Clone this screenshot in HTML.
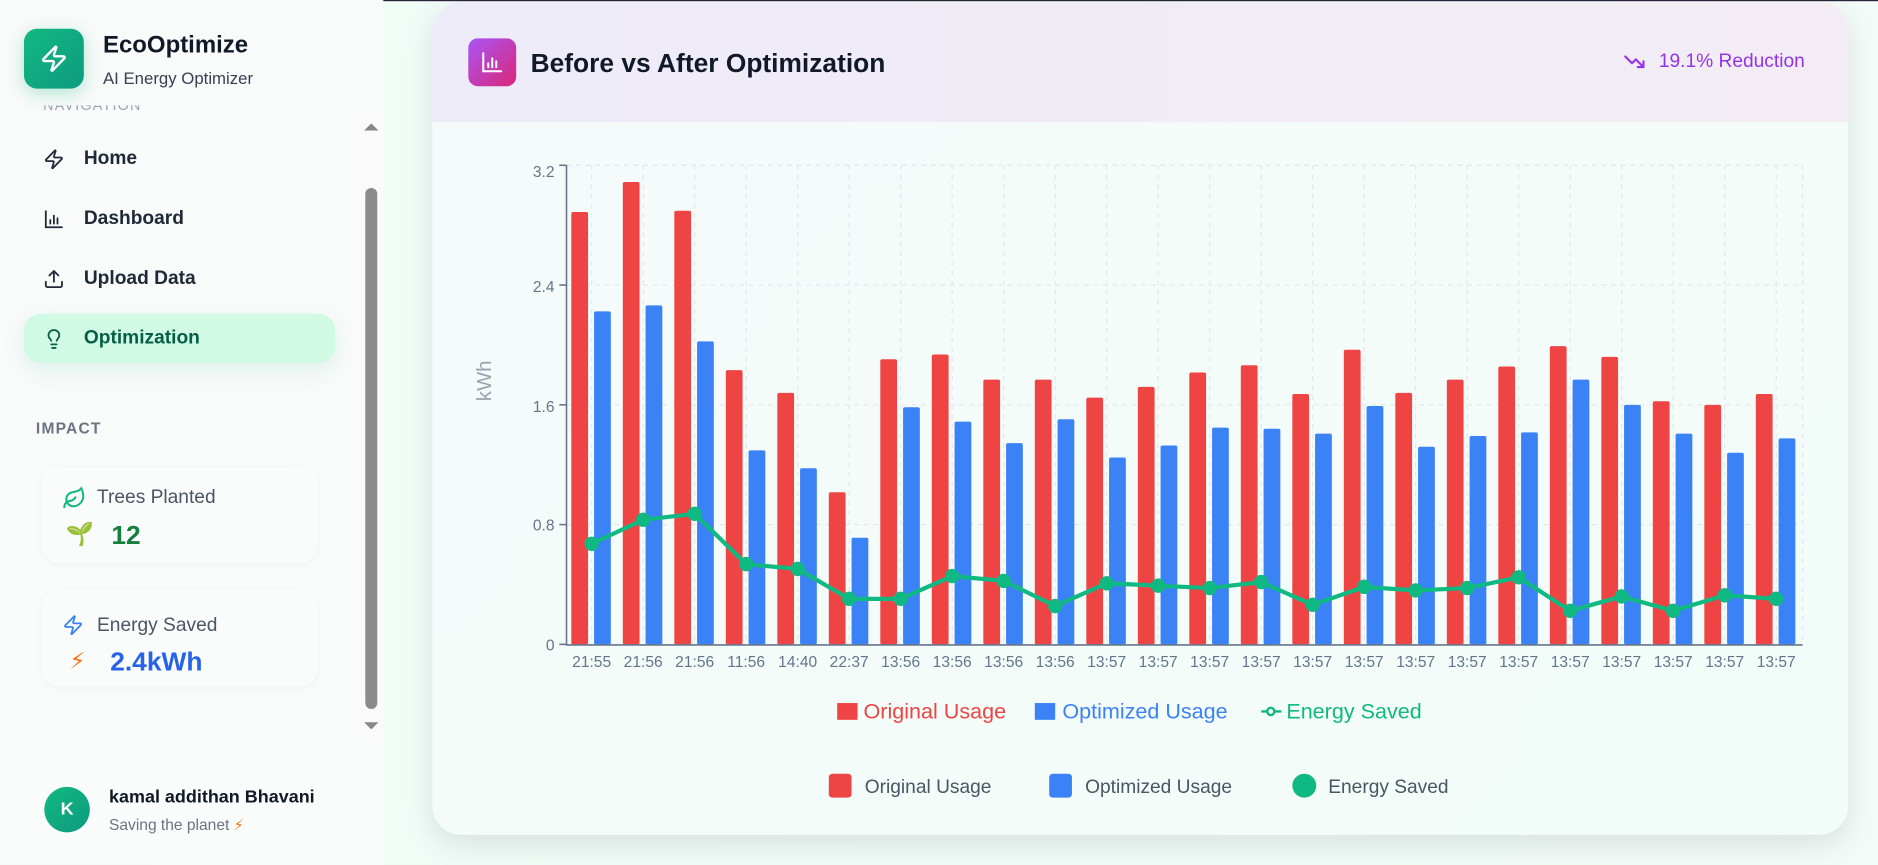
<!DOCTYPE html>
<html><head><meta charset="utf-8">
<style>
html,body{margin:0;padding:0;width:1878px;height:865px;overflow:hidden;background:#eefbf5;font-family:"Liberation Sans","DejaVu Sans",sans-serif;}
#w{position:absolute;left:0;top:0;width:1568px;height:722px;transform:scale(1.19770);transform-origin:0 0;background:linear-gradient(90deg,#effcf6,#f2fbf8);}
.sb{position:absolute;left:0;top:0;width:320px;height:722px;background:#f9fafa;}
.abs{position:absolute;}
.nav{position:absolute;left:20px;width:260px;height:40px;display:flex;align-items:center;font-size:16px;font-weight:600;color:#1f2937;}
.nav svg{position:absolute;left:16px;}
.nav span{position:absolute;left:50px;}
.card{position:absolute;left:35px;width:230px;height:80px;background:#fafbfb;border-radius:14px;box-shadow:0 1px 6px rgba(0,0,0,0.03);}
</style></head><body>
<div id="w">
<div class="abs" style="left:0;top:0;width:1568px;height:1px;background:#2a2238"></div>
<div class="sb">
  <div class="abs" style="left:20px;top:24px;width:50px;height:50px;border-radius:11px;background:linear-gradient(135deg,#12b981,#0e9a80);box-shadow:0 4px 14px rgba(16,185,129,0.3)"></div>
  <svg class="abs" style="left:33px;top:37px" width="24" height="24" viewBox="0 0 24 24" fill="none" stroke="#fff" stroke-width="2" stroke-linejoin="round"><path d="M4 14a1 1 0 0 1-.78-1.63l9.9-10.2a.5.5 0 0 1 .86.46l-1.92 6.02A1 1 0 0 0 13 10h7a1 1 0 0 1 .78 1.63l-9.9 10.2a.5.5 0 0 1-.86-.46l1.92-6.02A1 1 0 0 0 11 14z"/></svg>
  <div class="abs" style="left:86px;top:27px;font-size:20px;font-weight:700;color:#111827">EcoOptimize</div>
  <div class="abs" style="left:86px;top:57px;font-size:14px;color:#374151">AI Energy Optimizer</div>
  <div class="abs" style="left:36px;top:88px;width:112px;height:6px;overflow:hidden;font-size:12px;color:#9ca3af;letter-spacing:1px;line-height:0px">NAVIGATION</div>
  <div class="nav" style="top:113px"><svg width="18" height="18" viewBox="0 0 24 24" fill="none" stroke="#1f2937" stroke-width="2" stroke-linejoin="round"><path d="M4 14a1 1 0 0 1-.78-1.63l9.9-10.2a.5.5 0 0 1 .86.46l-1.92 6.02A1 1 0 0 0 13 10h7a1 1 0 0 1 .78 1.63l-9.9 10.2a.5.5 0 0 1-.86-.46l1.92-6.02A1 1 0 0 0 11 14z"/></svg><span>Home</span></div>
  <div class="nav" style="top:163px"><svg width="18" height="18" viewBox="0 0 24 24" fill="none" stroke="#1f2937" stroke-width="2" stroke-linecap="round"><path d="M3 3v18h18M8 17v-4M12 17V8M16 17v-6"/></svg><span>Dashboard</span></div>
  <div class="nav" style="top:213px"><svg width="18" height="18" viewBox="0 0 24 24" fill="none" stroke="#1f2937" stroke-width="2" stroke-linecap="round" stroke-linejoin="round"><path d="M21 15v4a2 2 0 0 1-2 2H5a2 2 0 0 1-2-2v-4M17 8l-5-5-5 5M12 3v12"/></svg><span>Upload Data</span></div>
  <div class="nav" style="top:262px;height:41px;background:#d1fae5;border-radius:14px;color:#065f46;box-shadow:0 6px 18px rgba(16,185,129,0.12)"><svg width="18" height="18" viewBox="0 0 24 24" fill="none" stroke="#065f46" stroke-width="2" stroke-linecap="round"><path d="M9 18h6M10 22h4M15.1 14c.2-1 .7-1.7 1.4-2.5A4.7 4.7 0 0 0 18 8 6 6 0 0 0 6 8c0 1 .2 2.2 1.5 3.5.7.7 1.3 1.5 1.5 2.5"/></svg><span>Optimization</span></div>
  <div class="abs" style="left:30px;top:350px;font-size:13px;font-weight:600;color:#6b7280;letter-spacing:1px">IMPACT</div>
  <div class="card" style="top:390px"></div>
  <svg class="abs" style="left:52px;top:406px" width="20" height="20" viewBox="0 0 24 24" fill="none" stroke="#10b981" stroke-width="2" stroke-linecap="round"><path d="M11 20A7 7 0 0 1 9.8 6.1C15.5 5 17 4.5 19 2c1 2 2 4.2 2 8 0 5.5-4.8 10-10 10Z"/><path d="M2 21c0-3 1.9-5.4 5.2-6.1 2.5-.5 5-2 6-3.9"/></svg>
  <div class="abs" style="left:81px;top:407px;font-size:16px;color:#4b5563">Trees Planted</div>
  <div class="abs" style="left:55px;top:434px;font-size:19px">🌱</div>
  <div class="abs" style="left:93px;top:434px;font-size:22px;font-weight:700;color:#15803d">12</div>
  <div class="card" style="top:493px"></div>
  <svg class="abs" style="left:52px;top:513px" width="18" height="18" viewBox="0 0 24 24" fill="none" stroke="#3b82f6" stroke-width="2" stroke-linejoin="round"><path d="M4 14a1 1 0 0 1-.78-1.63l9.9-10.2a.5.5 0 0 1 .86.46l-1.92 6.02A1 1 0 0 0 13 10h7a1 1 0 0 1 .78 1.63l-9.9 10.2a.5.5 0 0 1-.86-.46l1.92-6.02A1 1 0 0 0 11 14z"/></svg>
  <div class="abs" style="left:81px;top:514px;font-size:16px;color:#4b5563">Energy Saved</div>
  <div class="abs" style="left:58px;top:541px;font-size:19px;color:#f97316">⚡</div>
  <div class="abs" style="left:92px;top:540px;font-size:22px;font-weight:700;color:#2563eb">2.4kWh</div>
  <div class="abs" style="left:302px;top:96px;width:16px;height:520px;background:#fafafa"></div>
  <div class="abs" style="left:304px;top:103px;width:0;height:0;border-left:6px solid transparent;border-right:6px solid transparent;border-bottom:6px solid #888"></div>
  <div class="abs" style="left:305px;top:157px;width:10px;height:435px;border-radius:5px;background:#8b8b8b"></div>
  <div class="abs" style="left:304px;top:603px;width:0;height:0;border-left:6px solid transparent;border-right:6px solid transparent;border-top:6px solid #888"></div>
  <div class="abs" style="left:20px;top:640px;width:280px;height:76px;background:#fafbfb;border-radius:14px"></div>
  <div class="abs" style="left:37px;top:657px;width:38px;height:38px;border-radius:50%;background:linear-gradient(135deg,#12b981,#0e9a80);color:#fff;font-weight:700;font-size:15px;line-height:38px;text-align:center">K</div>
  <div class="abs" style="left:91px;top:657px;font-size:15px;font-weight:700;color:#111827">kamal addithan Bhavani</div>
  <div class="abs" style="left:91px;top:681px;font-size:13px;color:#6b7280">Saving the planet <span style="color:#f97316;font-size:12px">⚡</span></div>
</div>

<div class="abs" style="left:361px;top:2px;width:1182px;height:695px;border-radius:24px;background:linear-gradient(135deg,#f5fbfa,#f2fcf8);box-shadow:0 8px 24px rgba(0,0,0,0.10);overflow:hidden">
  <div class="abs" style="left:0;top:0;width:1182px;height:100px;background:linear-gradient(90deg,#eeecf8,#f3ecf4)"></div>
  <div class="abs" style="left:30px;top:30px;width:40px;height:40px;border-radius:8px;background:linear-gradient(135deg,#a855f7,#db2777)"></div>
  <svg class="abs" style="left:40px;top:40px" width="20" height="20" viewBox="0 0 24 24" fill="none" stroke="#fff" stroke-width="2" stroke-linecap="round"><path d="M3 3v18h18M8 17v-4M12 17V8M16 17v-6"/></svg>
  <div class="abs" style="left:82px;top:38px;font-size:22px;font-weight:700;color:#111827">Before vs After Optimization</div>
  <svg class="abs" style="left:994px;top:42px" width="20" height="16" viewBox="0 0 24 20" fill="none" stroke="#9333ea" stroke-width="2.2" stroke-linecap="round" stroke-linejoin="round"><path d="M2 4l7 7 4-4 8 8M21 9v6h-6"/></svg>
  <div class="abs" style="left:1024px;top:41px;font-size:16px;color:#9333ea">19.1% Reduction</div>
</div>

<svg class="abs" style="left:0;top:0" width="1568" height="722" viewBox="0 0 1568 722" font-family="Liberation Sans, sans-serif">
<g stroke="#e3e8ee" stroke-dasharray="4 4" stroke-width="1">
<line x1="473" y1="138" x2="1505" y2="138"/><line x1="473" y1="238" x2="1505" y2="238"/><line x1="473" y1="338" x2="1505" y2="338"/><line x1="473" y1="438" x2="1505" y2="438"/>
<line x1="494" y1="138" x2="494" y2="538"/><line x1="537" y1="138" x2="537" y2="538"/><line x1="580" y1="138" x2="580" y2="538"/><line x1="623" y1="138" x2="623" y2="538"/><line x1="666" y1="138" x2="666" y2="538"/><line x1="709" y1="138" x2="709" y2="538"/><line x1="752" y1="138" x2="752" y2="538"/><line x1="795" y1="138" x2="795" y2="538"/><line x1="838" y1="138" x2="838" y2="538"/><line x1="881" y1="138" x2="881" y2="538"/><line x1="924" y1="138" x2="924" y2="538"/><line x1="967" y1="138" x2="967" y2="538"/><line x1="1010" y1="138" x2="1010" y2="538"/><line x1="1053" y1="138" x2="1053" y2="538"/><line x1="1096" y1="138" x2="1096" y2="538"/><line x1="1139" y1="138" x2="1139" y2="538"/><line x1="1182" y1="138" x2="1182" y2="538"/><line x1="1225" y1="138" x2="1225" y2="538"/><line x1="1268" y1="138" x2="1268" y2="538"/><line x1="1311" y1="138" x2="1311" y2="538"/><line x1="1354" y1="138" x2="1354" y2="538"/><line x1="1397" y1="138" x2="1397" y2="538"/><line x1="1440" y1="138" x2="1440" y2="538"/><line x1="1483" y1="138" x2="1483" y2="538"/><line x1="1505" y1="138" x2="1505" y2="538"/>
</g>
<g fill="#ef4444">
<rect x="477" y="177" width="14" height="361" rx="1.5"/><rect x="520" y="152" width="14" height="386" rx="1.5"/><rect x="563" y="176" width="14" height="362" rx="1.5"/><rect x="606" y="309" width="14" height="229" rx="1.5"/><rect x="649" y="328" width="14" height="210" rx="1.5"/><rect x="692" y="411" width="14" height="127" rx="1.5"/><rect x="735" y="300" width="14" height="238" rx="1.5"/><rect x="778" y="296" width="14" height="242" rx="1.5"/><rect x="821" y="317" width="14" height="221" rx="1.5"/><rect x="864" y="317" width="14" height="221" rx="1.5"/><rect x="907" y="332" width="14" height="206" rx="1.5"/><rect x="950" y="323" width="14" height="215" rx="1.5"/><rect x="993" y="311" width="14" height="227" rx="1.5"/><rect x="1036" y="305" width="14" height="233" rx="1.5"/><rect x="1079" y="329" width="14" height="209" rx="1.5"/><rect x="1122" y="292" width="14" height="246" rx="1.5"/><rect x="1165" y="328" width="14" height="210" rx="1.5"/><rect x="1208" y="317" width="14" height="221" rx="1.5"/><rect x="1251" y="306" width="14" height="232" rx="1.5"/><rect x="1294" y="289" width="14" height="249" rx="1.5"/><rect x="1337" y="298" width="14" height="240" rx="1.5"/><rect x="1380" y="335" width="14" height="203" rx="1.5"/><rect x="1423" y="338" width="14" height="200" rx="1.5"/><rect x="1466" y="329" width="14" height="209" rx="1.5"/>
</g>
<g fill="#3b82f6">
<rect x="496" y="260" width="14" height="278" rx="1.5"/><rect x="539" y="255" width="14" height="283" rx="1.5"/><rect x="582" y="285" width="14" height="253" rx="1.5"/><rect x="625" y="376" width="14" height="162" rx="1.5"/><rect x="668" y="391" width="14" height="147" rx="1.5"/><rect x="711" y="449" width="14" height="89" rx="1.5"/><rect x="754" y="340" width="14" height="198" rx="1.5"/><rect x="797" y="352" width="14" height="186" rx="1.5"/><rect x="840" y="370" width="14" height="168" rx="1.5"/><rect x="883" y="350" width="14" height="188" rx="1.5"/><rect x="926" y="382" width="14" height="156" rx="1.5"/><rect x="969" y="372" width="14" height="166" rx="1.5"/><rect x="1012" y="357" width="14" height="181" rx="1.5"/><rect x="1055" y="358" width="14" height="180" rx="1.5"/><rect x="1098" y="362" width="14" height="176" rx="1.5"/><rect x="1141" y="339" width="14" height="199" rx="1.5"/><rect x="1184" y="373" width="14" height="165" rx="1.5"/><rect x="1227" y="364" width="14" height="174" rx="1.5"/><rect x="1270" y="361" width="14" height="177" rx="1.5"/><rect x="1313" y="317" width="14" height="221" rx="1.5"/><rect x="1356" y="338" width="14" height="200" rx="1.5"/><rect x="1399" y="362" width="14" height="176" rx="1.5"/><rect x="1442" y="378" width="14" height="160" rx="1.5"/><rect x="1485" y="366" width="14" height="172" rx="1.5"/>
</g>
<polyline fill="none" stroke="#10b981" stroke-width="3.5" stroke-linejoin="round" points="494,454 537,434 580,429 623,471 666,475 709,500 752,500 795,481 838,485 881,506 924,487 967,489 1010,491 1053,486 1096,505 1139,490 1182,493 1225,491 1268,482 1311,510 1354,498 1397,510 1440,497 1483,500"/>
<g fill="#10b981">
<circle cx="494" cy="454" r="6"/><circle cx="537" cy="434" r="6"/><circle cx="580" cy="429" r="6"/><circle cx="623" cy="471" r="6"/><circle cx="666" cy="475" r="6"/><circle cx="709" cy="500" r="6"/><circle cx="752" cy="500" r="6"/><circle cx="795" cy="481" r="6"/><circle cx="838" cy="485" r="6"/><circle cx="881" cy="506" r="6"/><circle cx="924" cy="487" r="6"/><circle cx="967" cy="489" r="6"/><circle cx="1010" cy="491" r="6"/><circle cx="1053" cy="486" r="6"/><circle cx="1096" cy="505" r="6"/><circle cx="1139" cy="490" r="6"/><circle cx="1182" cy="493" r="6"/><circle cx="1225" cy="491" r="6"/><circle cx="1268" cy="482" r="6"/><circle cx="1311" cy="510" r="6"/><circle cx="1354" cy="498" r="6"/><circle cx="1397" cy="510" r="6"/><circle cx="1440" cy="497" r="6"/><circle cx="1483" cy="500" r="6"/>
</g>
<g stroke="#64748b" stroke-width="1.3">
<line x1="473" y1="138" x2="473" y2="539"/><line x1="473" y1="538.5" x2="1505" y2="538.5"/>
<line x1="467" y1="138" x2="473" y2="138"/><line x1="467" y1="238" x2="473" y2="238"/><line x1="467" y1="338" x2="473" y2="338"/><line x1="467" y1="438" x2="473" y2="438"/><line x1="467" y1="538" x2="473" y2="538"/>
</g>
<g font-size="13" fill="#64748b" text-anchor="end">
<text x="463" y="148">3.2</text><text x="463" y="244">2.4</text><text x="463" y="344">1.6</text><text x="463" y="443">0.8</text><text x="463" y="543">0</text>
</g>
<text transform="translate(410,318) rotate(-90)" font-size="17" fill="#9ca3af" text-anchor="middle">kWh</text>
<g font-size="13" fill="#64748b" text-anchor="middle">
<text x="494" y="557">21:55</text><text x="537" y="557">21:56</text><text x="580" y="557">21:56</text><text x="623" y="557">11:56</text><text x="666" y="557">14:40</text><text x="709" y="557">22:37</text><text x="752" y="557">13:56</text><text x="795" y="557">13:56</text><text x="838" y="557">13:56</text><text x="881" y="557">13:56</text><text x="924" y="557">13:57</text><text x="967" y="557">13:57</text><text x="1010" y="557">13:57</text><text x="1053" y="557">13:57</text><text x="1096" y="557">13:57</text><text x="1139" y="557">13:57</text><text x="1182" y="557">13:57</text><text x="1225" y="557">13:57</text><text x="1268" y="557">13:57</text><text x="1311" y="557">13:57</text><text x="1354" y="557">13:57</text><text x="1397" y="557">13:57</text><text x="1440" y="557">13:57</text><text x="1483" y="557">13:57</text>
</g>
<g font-size="18">
<rect x="699" y="587" width="17" height="14" fill="#ef4444"/><text x="721" y="600" fill="#ef4444">Original Usage</text>
<rect x="864" y="587" width="17" height="14" fill="#3b82f6"/><text x="887" y="600" fill="#3b82f6">Optimized Usage</text>
<line x1="1053" y1="594" x2="1070" y2="594" stroke="#10b981" stroke-width="2"/><circle cx="1061" cy="594" r="3" fill="#fff" stroke="#10b981" stroke-width="2"/><text x="1074" y="600" fill="#10b981">Energy Saved</text>
</g>
<g font-size="16" fill="#4b5563">
<rect x="692" y="646" width="19" height="20" rx="3" fill="#ef4444"/><text x="722" y="662">Original Usage</text>
<rect x="876" y="646" width="19" height="20" rx="3" fill="#3b82f6"/><text x="906" y="662">Optimized Usage</text>
<circle cx="1089" cy="656" r="10" fill="#10b981"/><text x="1109" y="662">Energy Saved</text>
</g>
</svg>
</div>
</body></html>
